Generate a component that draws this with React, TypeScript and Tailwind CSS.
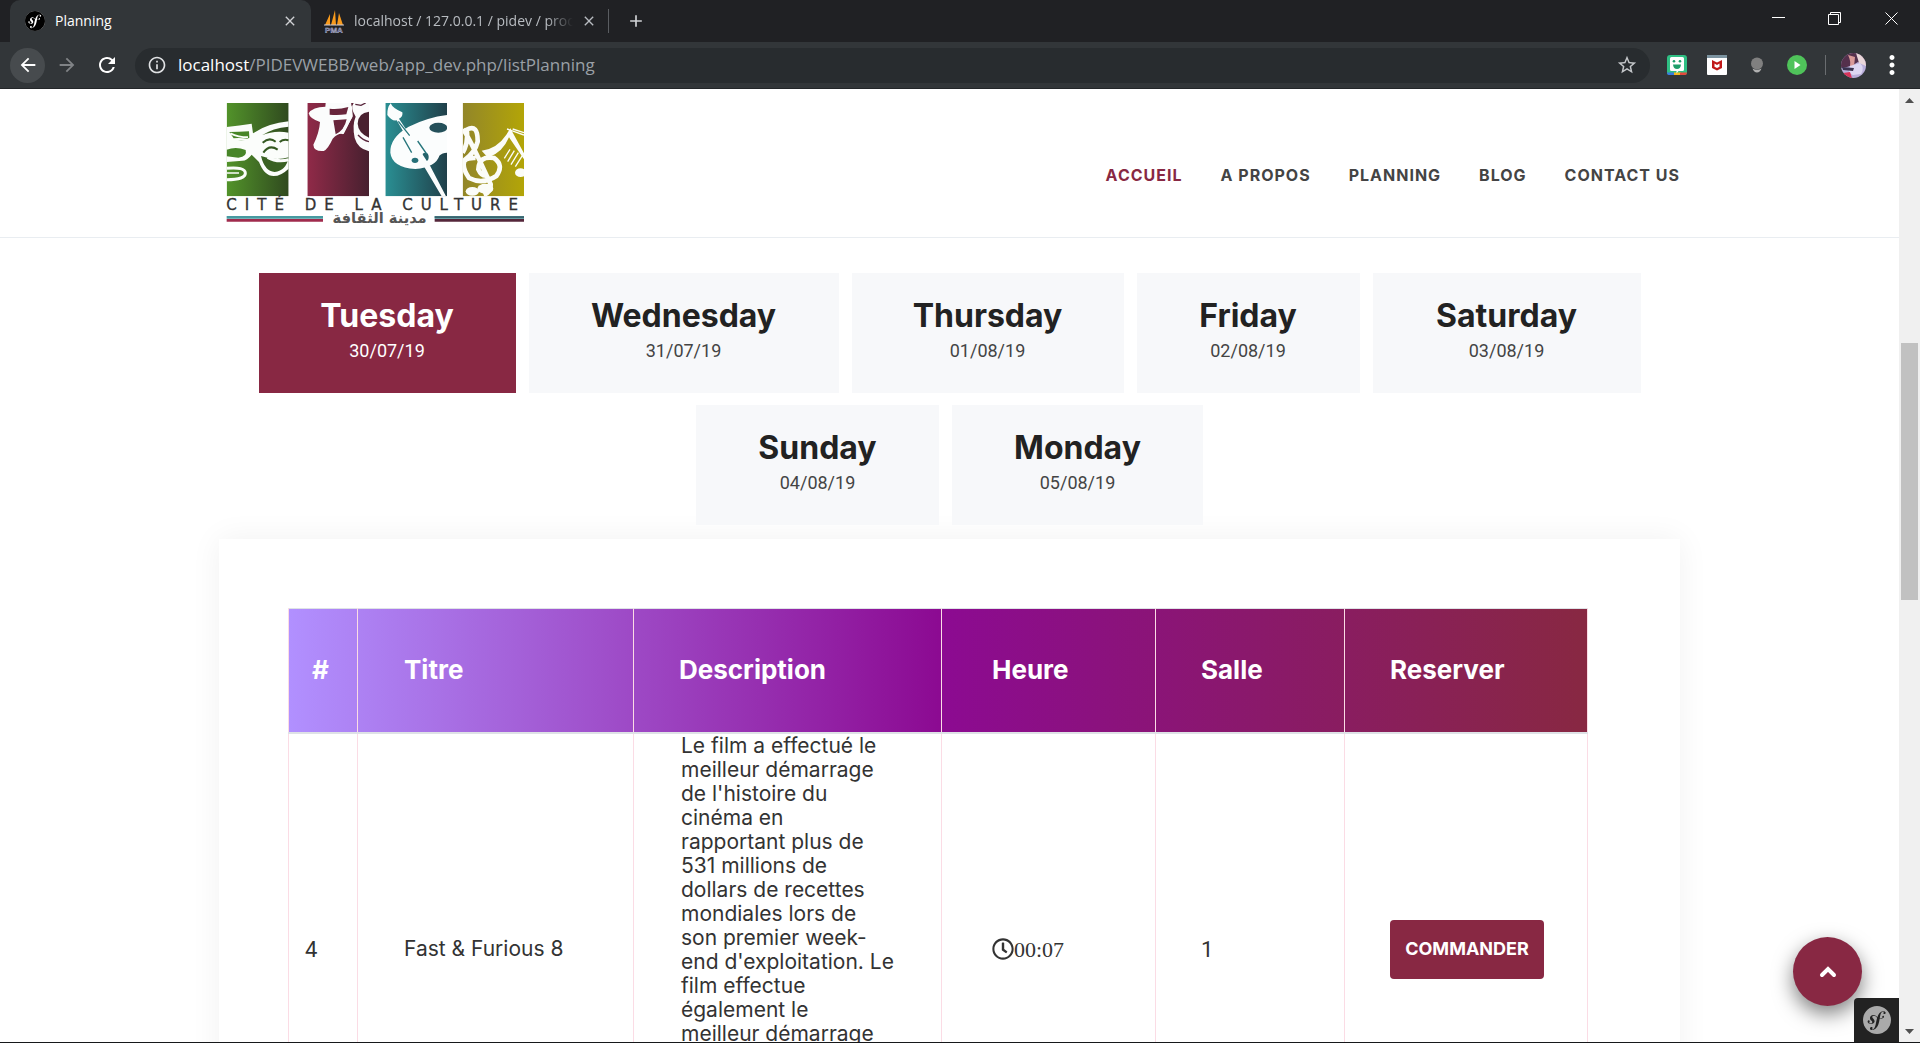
import React from "react";
import { MdArrowBack, MdArrowForward, MdRefresh, MdInfoOutline, MdStarBorder, MdClose, MdAdd, MdMoreVert } from "react-icons/md";
import { FaRegClock } from "react-icons/fa";
import { SiSymfony } from "react-icons/si";

const days = [
  { name: "Tuesday", date: "30/07/19", width: "w-[257px]" },
  { name: "Wednesday", date: "31/07/19", width: "w-[310px]" },
  { name: "Thursday", date: "01/08/19", width: "w-[272px]" },
  { name: "Friday", date: "02/08/19", width: "w-[223px]" },
  { name: "Saturday", date: "03/08/19", width: "w-[268px]" },
  { name: "Sunday", date: "04/08/19", width: "w-[243px]" },
  { name: "Monday", date: "05/08/19", width: "w-[251px]" },
];

const links = ["ACCUEIL", "A PROPOS", "PLANNING", "BLOG", "CONTACT US"];

const columns = [
  { label: "#", pad: "pl-[23px]" },
  { label: "Titre", pad: "pl-[46px]" },
  { label: "Description", pad: "pl-[45px]" },
  { label: "Heure", pad: "pl-[50px]" },
  { label: "Salle", pad: "pl-[45px]" },
  { label: "Reserver", pad: "pl-[45px]" },
];

const description = [
  "Le film a effectué le",
  "meilleur démarrage",
  "de l'histoire du",
  "cinéma en",
  "rapportant plus de",
  "531 millions de",
  "dollars de recettes",
  "mondiales lors de",
  "son premier week-",
  "end d'exploitation. Le",
  "film effectue",
  "également le",
  "meilleur démarrage",
];

function PmaIcon() {
  return (
    <svg viewBox="0 0 20 24" className="h-6 w-5 shrink-0" aria-hidden="true">
      <path d="M1 16 L6 5 L6 16Z M7 16 L11 1 L12 16Z M13 16 L15 4 L19 16Z" fill="#f89a1c" />
      <path d="M0 16 H20" stroke="#c9c9d6" />
      <text x="10" y="23.5" textAnchor="middle" fontSize="8" fontWeight="700" fill="#4a4f8c" stroke="#c9c9d6" strokeWidth="0.4" fontFamily="Liberation Sans">PMA</text>
    </svg>
  );
}

function TabStrip() {
  return (
    <div className="flex h-[42px] items-stretch bg-[#202124] font-['Open_Sans',sans-serif] text-sm">
      <div className="ml-[10px] flex w-[301px] items-center rounded-t-[10px] bg-[#323639] pl-[15px] pr-[13px] text-white">
        <span className="grid size-5 place-items-center rounded-full bg-white">
          <SiSymfony className="size-5 text-black" />
        </span>
        <span className="ml-[10px] flex-1">Planning</span>
        <button aria-label="Close tab"><MdClose className="size-4 text-[#d0d2d5]" /></button>
      </div>
      <div className="flex w-[300px] items-center pl-[13px] pr-[14px] text-[#b8bcc1]">
        <PmaIcon />
        <span className="ml-[10px] w-[219px] overflow-hidden whitespace-nowrap [mask-image:linear-gradient(to_right,black_88%,transparent)]">
          localhost / 127.0.0.1 / pidev / produit
        </span>
        <button aria-label="Close tab" className="ml-auto"><MdClose className="size-4" /></button>
      </div>
      <span className="my-[9px] -ml-[3px] w-px bg-[#5a5d61]" />
      <button aria-label="New tab" className="ml-[17px]"><MdAdd className="size-5 text-[#d0d2d5]" /></button>
      <div className="ml-auto flex items-center pb-[5px] text-white">
        <button aria-label="Minimize" className="grid w-[56px] place-items-center">
          <svg viewBox="0 0 13 13" className="size-[13px]" stroke="currentColor"><path d="M0 5.5H13" /></svg>
        </button>
        <button aria-label="Restore" className="grid w-[56px] place-items-center">
          <svg viewBox="0 0 13 13" className="size-[13px]" stroke="currentColor" fill="none"><path d="M.5 2.5H10.5V12.5H.5Z M2.5 2V.5H12.5V10.5H11" /></svg>
        </button>
        <button aria-label="Close" className="grid w-[58px] place-items-center">
          <svg viewBox="0 0 13 13" className="size-[13px]" stroke="currentColor"><path d="M.5 .5L12.5 12.5M12.5 .5L.5 12.5" /></svg>
        </button>
      </div>
    </div>
  );
}

function Extensions() {
  return (
    <div className="flex items-center gap-5 pl-[17px]">
      <svg viewBox="0 0 20 20" className="size-5">
        <rect width="20" height="20" rx="3" fill="#2fbf83" />
        <path d="M0 17.5H7V20H2Q0 20 0 18Z" fill="#3b7de0" />
        <path d="M7 17.5H14V20H7Z" fill="#f5b921" />
        <path d="M13 17.5H20Q20 20 18 20H13Z" fill="#e5483c" />
        <path d="M4.500 2H15.500Q17 2 17 3.500V14.500Q17 16 15.500 16H11.500L9.500 18.500V16H4.500Q3 16 3 14.500V3.500Q3 2 4.500 2Z" fill="#fff" />
        <circle cx="7" cy="6.300" r="1.300" fill="#1e9e6a" /><circle cx="13" cy="6.300" r="1.300" fill="#1e9e6a" />
        <path d="M6 9.500H14Q13.500 14 10 14T6 9.500Z" fill="#1e9e6a" />
      </svg>
      <svg viewBox="0 0 20 20" className="size-5">
        <rect width="20" height="20" rx="1" fill="#fff" /><rect width="20" height="3" fill="#7b93a0" />
        <path d="M5 5L10 7.500L15 5V13L10 15.500L5 13Z" fill="#c01818" />
        <path d="M7.500 8.500L10 10L12.500 8.500V11.800L10 13L7.500 11.800Z" fill="#fff" />
      </svg>
      <svg viewBox="0 0 20 20" className="size-5">
        <circle cx="10" cy="8.500" r="6" fill="#808080" />
        <path d="M5.500 13.500Q10 16 14.500 13.500Q13 17.500 10 17.500T5.500 13.500Z" fill="#b0b0b0" />
      </svg>
      <svg viewBox="0 0 20 20" className="size-5">
        <circle cx="10" cy="10" r="10" fill="#4fc35a" /><path d="M7.500 6L13.500 10L7.500 14Z" fill="#fff" />
      </svg>
      <span className="-ml-[2px] h-5 w-px bg-[#6a6d70]" />
      <svg viewBox="0 0 25 25" className="-ml-[5px] size-[25px] overflow-hidden rounded-full">
        <rect width="25" height="25" fill="#b9aeda" />
        <path d="M0 0H25V12L17 9L12 12L6 14L0 15Z" fill="#54304c" />
        <path d="M15 0H25V13L18 10Z" fill="#e9d6d9" />
        <path d="M7 2Q10 8 9 13L13 14L14 4Z" fill="#d99a98" />
        <path d="M9 13L19 10Q24 15 20 21L12 22Q6 20 9 13Z" fill="#ddd7f2" />
        <path d="M1 14L13 15L12 18L2 17Z" fill="#3a3350" />
        <path d="M2 20L9 19L11 25H5Z" fill="#d8345a" />
      </svg>
      <button aria-label="Menu" className="-ml-[9px]"><MdMoreVert className="size-[30px] text-white" /></button>
    </div>
  );
}

function Toolbar() {
  return (
    <div className="flex h-[47px] items-center border-b border-[#232629] bg-[#323639] pr-[13px] font-['Open_Sans',sans-serif]">
      <button aria-label="Back" className="ml-[10px] grid size-[35px] place-items-center rounded-full bg-[#474b4e]"><MdArrowBack className="size-[22px] text-white" /></button>
      <button aria-label="Forward" className="ml-[11px]"><MdArrowForward className="size-[22px] text-[#808386]" /></button>
      <button aria-label="Reload" className="ml-[17px]"><MdRefresh className="size-6 text-white" /></button>
      <div className="ml-4 flex h-[35px] flex-1 items-center rounded-full bg-[#282c2f] pl-[12px] pr-[12px]">
        <MdInfoOutline className="size-5 text-[#e0e2e4]" />
        <a href="#url" className="ml-[11px] flex-1 text-[17px] text-[#9aa0a6]"><span className="text-white">localhost</span>/PIDEVWEBB/web/app_dev.php/listPlanning</a>
        <button aria-label="Bookmark"><MdStarBorder className="size-[22px] text-[#c4c7ca]" /></button>
      </div>
      <Extensions />
    </div>
  );
}

function Logo() {
  return (
    <svg viewBox="33 38 904 372" className="h-[124px] w-[302px]" role="img" aria-label="Cité de la culture">
      <defs>
        <linearGradient id="green"><stop stopColor="#52932a" /><stop offset="1" stopColor="#304a1f" /></linearGradient>
        <linearGradient id="wine"><stop stopColor="#902a48" /><stop offset="1" stopColor="#47202f" /></linearGradient>
        <linearGradient id="teal"><stop stopColor="#2a8f93" /><stop offset="1" stopColor="#20404a" /></linearGradient>
        <linearGradient id="gold"><stop stopColor="#928629" /><stop offset="1" stopColor="#b3a507" /></linearGradient>
        <clipPath id="c1"><rect x="37" y="41" width="186" height="280" /></clipPath>
        <clipPath id="c2"><rect x="279" y="41" width="185" height="280" /></clipPath>
        <clipPath id="c3"><rect x="513" y="41" width="185" height="280" /></clipPath>
        <clipPath id="c4"><rect x="745" y="41" width="184" height="280" /></clipPath>
      </defs>
      <g clipPath="url(#c1)">
        <rect x="37" y="41" width="186" height="280" fill="url(#green)" />
        <path d="M37 113 Q75 109 112 103 L116 132 Q160 102 223 96 V112 Q175 116 143 138 Q180 122 223 130 V238 Q200 260 178 260 Q150 260 134 218 L112 196 Q98 214 84 214 L37 218Z" fill="#fbfdfb" />
        <path d="M45 128 Q75 128 104 126 L105 145 Q90 158 60 150Z M37 181 Q65 170 94 182 Q100 202 72 205 L37 201Z" fill="#478528" />
        <path d="M48 132 Q72 144 101 144 M58 150 Q80 148 100 152" fill="none" stroke="#fbfdfb" strokeWidth="6" />
        <path d="M145 160 Q165 142 184 157 M196 158 Q208 148 223 153 M147 190 Q165 164 190 181" fill="none" stroke="#355922" strokeWidth="6" />
        <path d="M140 200 Q184 216 223 204 Q216 244 181 248 Q151 246 140 200Z" fill="#3a6123" />
        <path d="M160 204 Q188 220 223 211" fill="none" stroke="#fbfdfb" strokeWidth="9" />
        <path d="M37 237 Q92 232 93 251 Q94 271 37 271" fill="none" stroke="#fbfdfb" strokeWidth="9" />
        <path d="M37 251 H74" stroke="#fbfdfb" strokeWidth="5" />
      </g>
      <g clipPath="url(#c2)">
        <rect x="279" y="41" width="185" height="280" fill="url(#wine)" />
        <path d="M334 41 L333 52 Q295 52 283 72 Q286 88 317 98 Q315 130 297 166 Q298 187 328 185 Q341 179 355 148 Q371 130 388 134 Q400 112 407 96 L415 80 L413 52 L405 41Z" fill="#fbfcfc" />
        <path d="M346 58 Q374 61 402 53 L396 75 Q370 79 346 76Z M357 93 L397 90 Q390 123 364 135Z" fill="#68253b" />
        <path d="M407 41 L411 82 L382 133" fill="none" stroke="#fbfcfc" strokeWidth="7" />
        <path d="M418 41 H464 V186 Q430 178 421 146 Q413 106 424 82 Q407 55 418 41Z" fill="#fbfcfc" />
        <path d="M464 67 Q431 70 430 103 Q431 130 464 145Z" fill="#49212f" />
        <path d="M431 137 Q446 153 464 157 M423 45 L440 48 L454 41" fill="none" stroke="#57243a" strokeWidth="4" />
      </g>
      <g clipPath="url(#c3)">
        <rect x="513" y="41" width="185" height="280" fill="url(#teal)" />
        <path d="M698 77 Q640 84 583 112 Q526 145 528 190 Q533 234 603 239 Q665 233 675 199 Q684 190 698 190Z" fill="#fbfdfd" />
        <ellipse cx="672" cy="115" rx="27" ry="15" fill="#24505a" />
        <ellipse cx="602" cy="213" rx="10" ry="8" fill="#267078" />
        <ellipse cx="633" cy="203" rx="10" ry="13" fill="#24626a" />
        <path d="M529 42 Q518 55 519 77 Q532 96 547 93 L682 321 H695 L648 231 L554 88 Q567 82 564 69 Q535 57 529 42Z" fill="#fbfdfd" />
        <path d="M552 96 L586 139 M610 155 L637 194 M566 144 L592 190" stroke="#27767c" strokeWidth="4" />
      </g>
      <g clipPath="url(#c4)">
        <rect x="745" y="41" width="184" height="280" fill="url(#gold)" />
        <path d="M745 190 Q763 161 757 121 Q791 102 790 157 Q782 190 752 211 Q740 232 764 266 Q805 287 846 260 Q870 228 839 206 Q794 198 792 240 Q802 263 820 258 M746 119 Q768 150 829 285 Q830 309 808 317 M745 238 Q739 204 784 206" fill="none" stroke="#fbfcf8" strokeWidth="14" />
        <ellipse cx="774" cy="306" rx="20" ry="13" fill="#fbfcf8" />
        <ellipse cx="813" cy="298" rx="24" ry="15" fill="#fbfcf8" />
        <ellipse cx="919" cy="250" rx="17" ry="13" fill="#fbfcf8" />
        <path d="M802 184 Q848 178 876 136 L888 117 L929 192 V210 L884 144 Q865 190 821 205Z" fill="#fbfcf8" />
        <path d="M870 207 L887 180 M880 217 L900 184 M890 226 L912 190 M903 232 L924 199 M878 119 L929 137 M895 119 L929 130" stroke="#fbfcf8" strokeWidth="4" />
      </g>
      <text x="36" y="361" fontFamily="DejaVu Sans" fontSize="45" letterSpacing="24" fill="#333" stroke="#333">CITÉ DE LA CULTURE</text>
      <path d="M37 384H326M661 384H929" stroke="#479aa1" strokeWidth="8" />
      <path d="M37 393H326" stroke="#a02b4d" strokeWidth="8" />
      <path d="M661 393H929" stroke="#55263a" strokeWidth="8" />
      <path d="M661 384H929" stroke="#3b626e" strokeWidth="6" />
      <text x="496" y="400" textAnchor="middle" fontFamily="DejaVu Sans" fontWeight="700" fontSize="44" fill="#555">مدينة الثقافة</text>
    </svg>
  );
}

function SiteHeader() {
  return (
    <header className="h-[149px] border-b border-[#e9edf1]">
      <div className="mx-auto flex h-full max-w-[1461px] justify-between">
        <a href="#home" className="ml-[6px] mt-[13px]"><Logo /></a>
        <nav className="mt-[74px] flex gap-[38px] text-base font-bold leading-6 tracking-[1px] text-[#444]">
          {links.map((l, i) => (
            <a key={l} href={"#" + l} className={i === 0 ? "text-[#882843]" : ""}>{l}</a>
          ))}
        </nav>
      </div>
    </header>
  );
}

function ScheduleTable() {
  return (
    <table className="w-full table-fixed border-collapse text-left text-[#333]">
      <colgroup>
        <col className="w-[69px]" /><col className="w-[276px]" /><col className="w-[308px]" />
        <col className="w-[214px]" /><col className="w-[189px]" /><col className="w-[243px]" />
      </colgroup>
      <thead>
        <tr className="h-[124px] border-t border-b-2 border-[#dee2e6] bg-[linear-gradient(to_right,#b190ff,#8c0a92_50%,#882842)] text-[26px] leading-9 text-white">
          {columns.map((c) => (
            <th key={c.label} scope="col" className={"border-x border-x-[#fbdce5] font-bold " + c.pad}>{c.label}</th>
          ))}
        </tr>
      </thead>
      <tbody>
        <tr className="h-[432px] text-[21px] [&>td]:border-x [&>td]:border-[#fbdce5]">
          <td className="pl-4 font-['Roboto',sans-serif] text-[22px]">4</td>
          <td className="pl-[46px]">Fast &amp; Furious 8</td>
          <td className="pl-[47px] align-top leading-6">
            {description.map((line, i) => <span key={i} className="block whitespace-nowrap">{line}</span>)}
          </td>
          <td className="pl-[50px] font-['Liberation_Serif',serif] text-[22px]">
            <span className="flex items-center"><FaRegClock className="size-[22px]" />00:07</span>
          </td>
          <td className="pl-[45px] font-['Roboto',sans-serif] text-[22px]">1</td>
          <td className="pl-[45px]">
            <button className="h-[59px] w-[154px] rounded bg-[#882843] text-lg font-bold text-white">COMMANDER</button>
          </td>
        </tr>
      </tbody>
    </table>
  );
}

function Scrollbar() {
  return (
    <div className="flex w-[21px] flex-col items-center bg-[#f0f0f0]">
      <svg viewBox="0 0 9 5" className="mt-[9px] h-[5px] w-[9px]"><path d="M0 5L4.500 0L9 5Z" fill="#505050" /></svg>
      <div className="mt-[240px] h-[257px] w-[17px] bg-[#c1c1c1]" />
      <svg viewBox="0 0 9 5" className="mb-[8px] mt-auto h-[5px] w-[9px]"><path d="M0 0L4.500 5L9 0Z" fill="#505050" /></svg>
    </div>
  );
}

export default function App() {
  return (
    <div className="flex h-screen flex-col overflow-hidden border-b border-[#16181a] bg-white">
      <TabStrip />
      <Toolbar />
      <div className="flex min-h-0 flex-1">
        <div className="relative min-w-0 flex-1 overflow-hidden font-['Inter',sans-serif]">
          <SiteHeader />
          <main className="mx-auto max-w-[1461px] pt-[35px]">
            <div className="flex flex-wrap justify-center gap-x-[13px] gap-y-3">
              {days.map((d, i) => (
                <button
                  key={d.name}
                  className={"flex h-[120px] flex-col items-center pt-6 " + d.width + (i === 0 ? " bg-[#882843] text-white" : " bg-[#f7f8fa] text-[#222]")}
                >
                  <span className="text-[32px] font-bold leading-[38px]">{d.name}</span>
                  <span className={"font-['Roboto',sans-serif] text-lg leading-8 " + (i === 0 ? "text-white" : "text-[#444]")}>{d.date}</span>
                </button>
              ))}
            </div>
            <section className="mt-[14px] bg-white pl-[69px] pr-[93px] pt-[69px] shadow-[0_0_30px_rgba(0,0,0,0.06)]">
              <ScheduleTable />
            </section>
          </main>
          <button aria-label="Back to top" className="absolute bottom-[36px] right-[37px] grid size-[69px] place-items-center rounded-full bg-[#882843] text-white shadow-[0_8px_20px_rgba(0,0,0,0.5)]">
            <svg viewBox="0 0 18 12" className="h-3 w-[18px]" fill="none" stroke="currentColor" strokeWidth="4" strokeLinecap="round"><path d="M3 9L9 3L15 9" /></svg>
          </button>
          <button aria-label="Symfony toolbar" className="absolute bottom-0 right-0 grid h-11 w-[45px] place-items-center rounded-tl bg-[#222]">
            <SiSymfony className="size-7 text-[#aaa]" />
          </button>
        </div>
        <Scrollbar />
      </div>
    </div>
  );
}
